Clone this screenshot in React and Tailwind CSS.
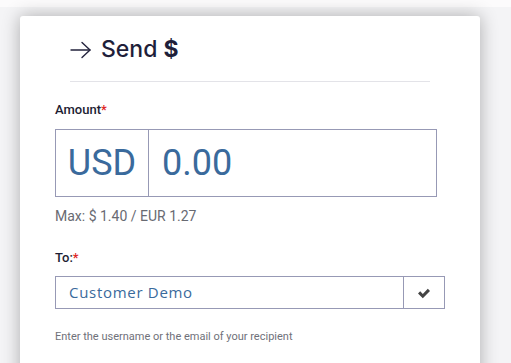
import React from "react";

function Arrow() {
  return (
    <svg width="22" height="18" viewBox="0 0 22 18" fill="none" stroke="#23233d" strokeWidth="1.4" strokeLinecap="round" strokeLinejoin="round">
      <path d="M1 9h19" />
      <path d="M12 1.5L20 9l-8 7.5" />
    </svg>
  );
}

function Check() {
  return (
    <svg width="14" height="12" viewBox="0 0 14 12">
      <path d="M1 6.5l2.2-2.2 2.6 2.6L10.8 1.8 13 4 5.8 11.2z" fill="#444" />
    </svg>
  );
}

export default function App() {
  return (
    <div className="h-screen bg-[#f4f4f6] overflow-hidden font-['Roboto',sans-serif]">
      <div className="h-[7px] bg-[#fcfbfc]" />
      <div className="ml-[20px] mr-[31px] mt-[9px] h-[400px] rounded-[3px] bg-white shadow-[0_0_18px_rgba(0,0,0,0.3)]">
        <div className="flex items-center gap-[9px] pl-[50px] pt-[2px] h-[65px]">
          <Arrow />
          <h1 className="text-[23px] font-medium text-[#1f1f3a] font-['Inter',sans-serif]">
            Send <span className="font-bold">$</span>
          </h1>
        </div>
        <div className="mx-[50px] border-t border-[#e3e3e8]" />

        <div className="pl-[35px] pt-[20px]">
          <label className="block text-[13px] font-medium text-[#1d1d33] leading-[16px]">
            Amount<span className="text-[#e02424]">*</span>
          </label>
          <div className="mt-[11px] flex w-[382px] h-[68px] border border-[#9799b5]">
            <div className="w-[93px] border-r border-[#9799b5] flex items-center justify-center text-[36px] text-[#3a6a9c]">
              USD
            </div>
            <div className="flex items-center pl-[13px] text-[36px] text-[#3a6a9c]">0.00</div>
          </div>
          <p className="mt-[9px] text-[14px] text-[#686a72]">Max: $ 1.40 / EUR 1.27</p>

          <label className="block mt-[23px] text-[13px] font-medium text-[#1d1d33] leading-[16px]">
            To:<span className="text-[#e02424]">*</span>
          </label>
          <div className="mt-[10px] flex w-[390px] h-[33px] border border-[#9799b5]">
            <div className="flex-1 flex items-center pl-[13px] text-[15px] tracking-[0.7px] text-[#3a6a9c] font-['Open_Sans',sans-serif]">
              Customer Demo
            </div>
            <div className="w-[41px] border-l border-[#9799b5] flex items-center justify-center">
              <Check />
            </div>
          </div>
          <p className="mt-[20px] text-[11px] text-[#6f717a]">Enter the username or the email of your recipient</p>
        </div>
      </div>
    </div>
  );
}
